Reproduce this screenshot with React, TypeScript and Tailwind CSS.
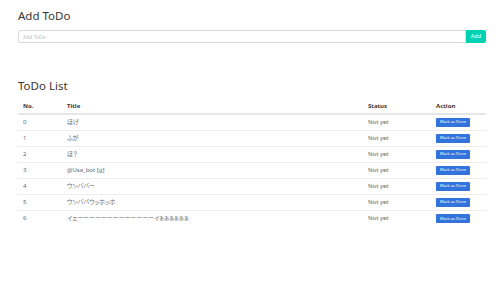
const todos = [
  { id: 0, title: "ほげ" },
  { id: 1, title: "ふが" },
  { id: 2, title: "ほ？" },
  { id: 3, title: "@Usa_bot [g]" },
  { id: 4, title: "ウンババー" },
  { id: 5, title: "ウンババウッホッホ" },
  { id: 6, title: "イェーーーーーーーーーーーーーイぁぁぁぁぁぁ" },
];

const font = "font-['Noto_Sans','Noto_Sans_CJK_JP',sans-serif]";

export default function App() {
  return (
    <div className={`${font} min-h-[282px] w-[500px] bg-white pl-[18px] pr-[14px] pt-[10px] text-[#666]`}>
      {/* Add form */}
      <h1 className="text-[11.5px] leading-none font-normal text-[#363636]">Add ToDo</h1>
      <div className="mt-[8.5px] flex h-[13px]">
        <input
          type="text"
          placeholder="Add ToDo"
          className="h-full flex-1 rounded-l-[2px] border border-[#dbdbdb] px-[4px] text-[5px] outline-none placeholder:text-[#c0c0c0]"
        />
        <button
          type="button"
          className="h-full w-[20px] rounded-r-[2px] bg-[#00d1b2] text-[5.5px] leading-none text-white"
        >
          Add
        </button>
      </div>

      {/* List */}
      <h2 className="mt-[37px] text-[11.5px] leading-none font-normal text-[#363636]">ToDo List</h2>
      <div className="mt-[5px] text-[6px] leading-[9px]">
        <div className="grid grid-cols-[44px_1fr_68px_55px] items-center border-b-2 border-[#e6e6e6] pt-[5px] pb-[2px] font-bold text-[#363636]">
          <span className="px-[5px]">No.</span>
          <span className="px-[5px]">Title</span>
          <span className="px-[5px]">Status</span>
          <span className="px-[5px]">Action</span>
        </div>
        {todos.map((t, i) => (
          <div
            key={t.id}
            className={`grid h-[16px] grid-cols-[44px_1fr_68px_55px] items-center ${i < todos.length - 1 ? "border-b border-[#ededed]" : ""}`}
          >
            <span className="px-[5px]">{t.id}</span>
            <span className="px-[5px] whitespace-nowrap [font-feature-settings:'palt']">{t.title}</span>
            <span className="px-[5px]">Not yet</span>
            <span className="px-[5px]">
              <button
                type="button"
                className="flex h-[9px] w-[34px] items-center justify-center rounded-[1px] bg-[#3273dc] text-[4px] leading-none text-white"
              >
                Mark as Done
              </button>
            </span>
          </div>
        ))}
      </div>
    </div>
  );
}
